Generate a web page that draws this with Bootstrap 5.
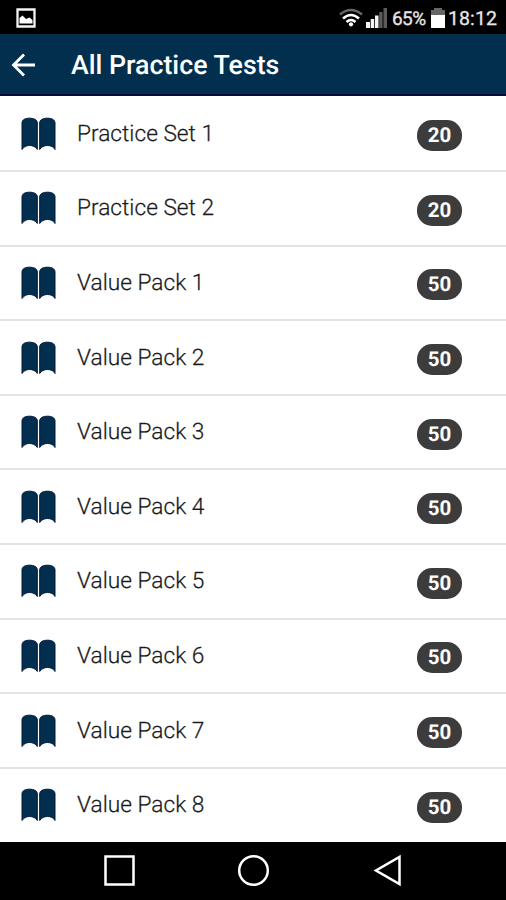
<!DOCTYPE html>
<html lang="en">
<head>
<meta charset="utf-8">
<meta name="viewport" content="width=device-width, initial-scale=1">
<title>All Practice Tests</title>
<link rel="stylesheet" href="https://cdn.jsdelivr.net/npm/bootstrap@5.3.0/dist/css/bootstrap.min.css">
<style>
  body { font-family: Roboto, "Liberation Sans", sans-serif; text-rendering: geometricPrecision; }
  .screen { height: 900px; width: 506px; }
  .status-bar { height: 34px; padding: 2px 9px 0 16px; font-size: 19px; line-height: 34px; color: #e6e6e6; }
  .status-bar svg { flex: none; }
  .signal { margin-left: 3px; }
  .pct { font-size: 19px; margin-left: 4px; width: 39px; letter-spacing: -.5px; padding-top: 2px; -webkit-text-stroke: .3px #e6e6e6; }
  .clock { letter-spacing: .1px; font-size: 19.5px; margin-left: 3px; padding-top: 2px; -webkit-text-stroke: .3px #e6e6e6; }
  .app-bar { height: 61.500px; background: #012f4d; border-bottom: 2px solid #060b3e; padding-left: 11px; }
  .app-title { font-size: 26.750px; font-weight: 500; margin-left: 36px; line-height: 58px; padding-top: 3px; }
  .app-bar svg { margin-top: 3px; }
  .tests { height: 746px; }
  .test-row { padding: 0 44px 0 20px; border-top: 2px solid #e3e3e3; min-height: 0; color: #1a1a1a; }
  .test-row:first-child { border-top-color: #fff; }
  .test-name { font-size: 22.700px; font-weight: 300; margin-left: 21px; line-height: 30px; -webkit-text-stroke: .25px #1a1a1a; }
  .count { width: 45px; height: 31px; background: #3c3c3c; border-radius: 15px; font-size: 20.5px; line-height: 32px; margin-top: 4px; }
  .nav-keys { height: 58.500px; padding: 0 103px; }
</style>
</head>
<body class="bg-white">
<svg class="d-none" xmlns="http://www.w3.org/2000/svg">
  <symbol id="book" viewBox="0 0 36 34">
    <path fill="#012f4d" stroke="#02183d" stroke-width="1" d="M2 32.500V6C2 2.500 5.500 1.200 9.500 1.200S17.300 2.500 17.300 6V32.500C15.500 29.500 12.500 28.500 9.500 28.500S4 29.500 2 32.500ZM19.700 32.500V6C19.700 2.500 23.500 1.200 27.500 1.200S35 2.500 35 6V32.500C33.500 29.500 30.500 28.500 27.500 28.500S21.500 29.500 19.700 32.500Z"/>
  </symbol>
</svg>
<div class="screen d-flex flex-column overflow-hidden">
  <div class="status-bar bg-black d-flex align-items-center">
    <svg width="20" height="20" viewBox="0 0 20 20" class="me-auto">
      <path fill="none" stroke="#f4f4f4" stroke-width="2.300" d="M1.500 1.500H18.500V18.500H1.500Z"/>
      <path fill="#fff" d="M3.500 15.500V10L6.500 7.500 10 11 13.500 9.500 16.500 12V15.500Z"/>
    </svg>
    <svg width="24" height="20" viewBox="0 0 24 20">
      <g fill="none" stroke-width="2.600">
        <path stroke="#666" d="M1 6.500Q12-2.500 23 6.500"/>
        <path stroke="#fff" d="M4 10.500Q12 3.500 20 10.500M7.500 14Q12 10 16.500 14"/>
      </g>
      <circle cx="12" cy="16.300" r="2.100" fill="#fff"/>
    </svg>
    <svg width="22" height="20" viewBox="0 0 22 20" class="signal">
      <path fill="#f4f4f4" d="M0 14H4V20H0ZM4.700 11H8.200V20H4.700ZM9 7.500H12.500V20H9Z"/>
      <path fill="#5c5c5c" d="M13.200 4H16.500V20H13.200ZM17.500 0H21V20H17.500Z"/>
    </svg>
    <span class="pct">65%</span>
    <svg width="14" height="20" viewBox="0 0 14 20">
      <path fill="#666" d="M3 0H11V2H14V7H0V2H3Z"/>
      <path fill="#fff" d="M0 7H14V20H0Z"/>
    </svg>
    <span class="clock">18:12</span>
  </div>
  <header class="app-bar d-flex align-items-center text-white">
    <svg width="24" height="24" viewBox="0 0 24 24" fill="none" stroke="#fff" stroke-width="2.800"><path d="M24 12H2.500M13 1.500 2.500 12 13 22.500"/></svg>
    <h1 class="app-title mb-0">All Practice Tests</h1>
  </header>
  <main class="tests d-flex flex-column">
    <div class="test-row d-flex align-items-center flex-fill"><svg width="36" height="34"><use href="#book"/></svg><span class="test-name">Practice Set 1</span><span class="count ms-auto text-white fw-bold text-center">20</span></div>
    <div class="test-row d-flex align-items-center flex-fill"><svg width="36" height="34"><use href="#book"/></svg><span class="test-name">Practice Set 2</span><span class="count ms-auto text-white fw-bold text-center">20</span></div>
    <div class="test-row d-flex align-items-center flex-fill"><svg width="36" height="34"><use href="#book"/></svg><span class="test-name">Value Pack 1</span><span class="count ms-auto text-white fw-bold text-center">50</span></div>
    <div class="test-row d-flex align-items-center flex-fill"><svg width="36" height="34"><use href="#book"/></svg><span class="test-name">Value Pack 2</span><span class="count ms-auto text-white fw-bold text-center">50</span></div>
    <div class="test-row d-flex align-items-center flex-fill"><svg width="36" height="34"><use href="#book"/></svg><span class="test-name">Value Pack 3</span><span class="count ms-auto text-white fw-bold text-center">50</span></div>
    <div class="test-row d-flex align-items-center flex-fill"><svg width="36" height="34"><use href="#book"/></svg><span class="test-name">Value Pack 4</span><span class="count ms-auto text-white fw-bold text-center">50</span></div>
    <div class="test-row d-flex align-items-center flex-fill"><svg width="36" height="34"><use href="#book"/></svg><span class="test-name">Value Pack 5</span><span class="count ms-auto text-white fw-bold text-center">50</span></div>
    <div class="test-row d-flex align-items-center flex-fill"><svg width="36" height="34"><use href="#book"/></svg><span class="test-name">Value Pack 6</span><span class="count ms-auto text-white fw-bold text-center">50</span></div>
    <div class="test-row d-flex align-items-center flex-fill"><svg width="36" height="34"><use href="#book"/></svg><span class="test-name">Value Pack 7</span><span class="count ms-auto text-white fw-bold text-center">50</span></div>
    <div class="test-row d-flex align-items-center flex-fill"><svg width="36" height="34"><use href="#book"/></svg><span class="test-name">Value Pack 8</span><span class="count ms-auto text-white fw-bold text-center">50</span></div>
  </main>
  <footer class="nav-keys bg-black d-flex align-items-center justify-content-between">
    <svg width="33" height="33" fill="none" stroke="#fff" stroke-width="2.500"><path d="M2.500 2.500H30.500V30.500H2.500Z"/></svg>
    <svg width="33" height="33" fill="none" stroke="#fff" stroke-width="2.500"><circle cx="16.500" cy="16.500" r="14.300"/></svg>
    <svg width="33" height="33" fill="none" stroke="#fff" stroke-width="2.500"><path d="M29.500 3V30L6 16.500Z"/></svg>
  </footer>
</div>
<script src="https://cdn.jsdelivr.net/npm/bootstrap@5.3.0/dist/js/bootstrap.bundle.min.js"></script>
</body>
</html>
